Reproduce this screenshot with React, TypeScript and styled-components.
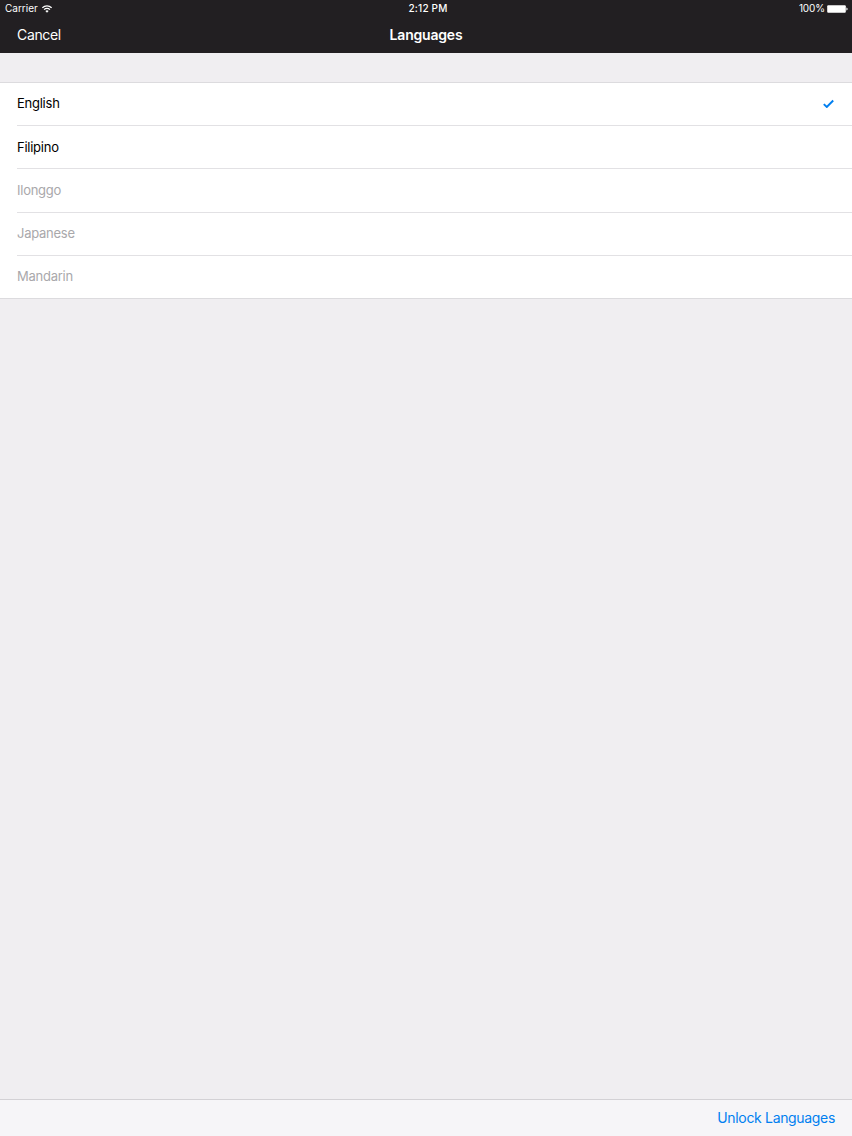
import React from "react";
import styled, { createGlobalStyle } from "styled-components";

const Global = createGlobalStyle`
  * { box-sizing: border-box; }
  body { margin: 0; background: #f0eef1; font-family: Inter, "Liberation Sans", sans-serif; }
`;
const Screen = styled.div`
  height: 1136px; width: 852px; display: flex; flex-direction: column; background: #f0eef1;
`;
const Header = styled.header`background: #221f22; color: #fff; height: 53px;`;
const StatusBar = styled.div`
  height: 17px; padding: 0 4px 0 5px; display: grid; grid-template-columns: 1fr auto 1fr;
  align-items: center; font-size: 10px; line-height: 17px;
`;
const StatusSide = styled.div<{ $end?: boolean }>`
  display: flex; align-items: center; gap: ${p => (p.$end ? 2 : 4)}px;
  letter-spacing: ${p => (p.$end ? -0.1 : 0)}px;
  justify-content: ${p => (p.$end ? "flex-end" : "flex-start")};
`;
const Clock = styled.span`font-weight: 500; letter-spacing: 0.2px; padding-left: 3px;`;
const NavBar = styled.div`
  height: 36px; padding: 0 17px; display: grid; grid-template-columns: 1fr auto 1fr; align-items: center;
`;
const NavButton = styled.button<{ $color: string }>`
  border: 0; padding: 0; background: none; font: inherit; font-size: 14px; line-height: 18px;
  letter-spacing: -0.33px; color: ${p => p.$color}; justify-self: start;
`;
const Title = styled.h1`
  margin: 0; font-size: 14px; line-height: 18px; font-weight: 600; letter-spacing: -0.2px;
`;
const List = styled.ul`
  list-style: none; margin: 29px 0 0; padding: 0 0 0 17px; background: #fff;
  border-top: 1px solid #dcdbde; border-bottom: 1px solid #dcdbde;
`;
const Row = styled.li<{ $locked?: boolean }>`
  height: 43.2px; padding: 0 18px 1px 0; display: flex; align-items: center; justify-content: space-between;
  font-size: 13px; letter-spacing: -0.25px; color: ${p => (p.$locked ? "#a9a8ab" : "#000")};
  &:first-child { height: 42.2px; padding-bottom: 2px; }
  & + & { border-top: 1px solid #e2e1e4; }
`;
const Toolbar = styled.footer`
  margin-top: auto; height: 37px; padding: 0 17px; display: flex; align-items: center; justify-content: flex-end;
  background: #f6f5f8; border-top: 1px solid #d3d1d5;
`;

const languages = [
  { name: "English", selected: true },
  { name: "Filipino" },
  { name: "Ilonggo", locked: true },
  { name: "Japanese", locked: true },
  { name: "Mandarin", locked: true },
];

const Wifi = () => (
  <svg width="10" height="8" viewBox="0 0 10 8" fill="none" stroke="#fff" strokeWidth="1.3">
    <path d="M.4 2.8a6.5 6.5 0 0 1 9.2 0M2.1 4.6a4.1 4.1 0 0 1 5.8 0" />
    <path d="M5 7.7 3.4 6.1a2.3 2.3 0 0 1 3.2 0z" fill="#fff" stroke="none" />
  </svg>
);
const Battery = () => (
  <svg width="21" height="8" viewBox="0 0 21 8">
    <rect x=".2" y=".3" width="18.6" height="7.4" rx="1" fill="#fff" />
    <path d="M19.4 2.6q1.2.3 1.2 1.4t-1.2 1.4z" fill="#fff" />
  </svg>
);
const Check = () => (
  <svg width="11" height="9" viewBox="0 0 11 9" fill="none" stroke="#007ff0" strokeWidth="1.9">
    <path d="M.8 5.1 3.8 8 10.2 1.5" />
  </svg>
);

export default function App() {
  return (
    <Screen>
      <Global />
      <Header>
        <StatusBar>
          <StatusSide>Carrier <Wifi /></StatusSide>
          <Clock>2:12 PM</Clock>
          <StatusSide $end>100% <Battery /></StatusSide>
        </StatusBar>
        <NavBar>
          <NavButton $color="#fff">Cancel</NavButton>
          <Title>Languages</Title>
        </NavBar>
      </Header>
      <List>
        {languages.map(l => (
          <Row key={l.name} $locked={l.locked}>{l.name}{l.selected && <Check />}</Row>
        ))}
      </List>
      <Toolbar><NavButton $color="#007ff0">Unlock Languages</NavButton></Toolbar>
    </Screen>
  );
}
